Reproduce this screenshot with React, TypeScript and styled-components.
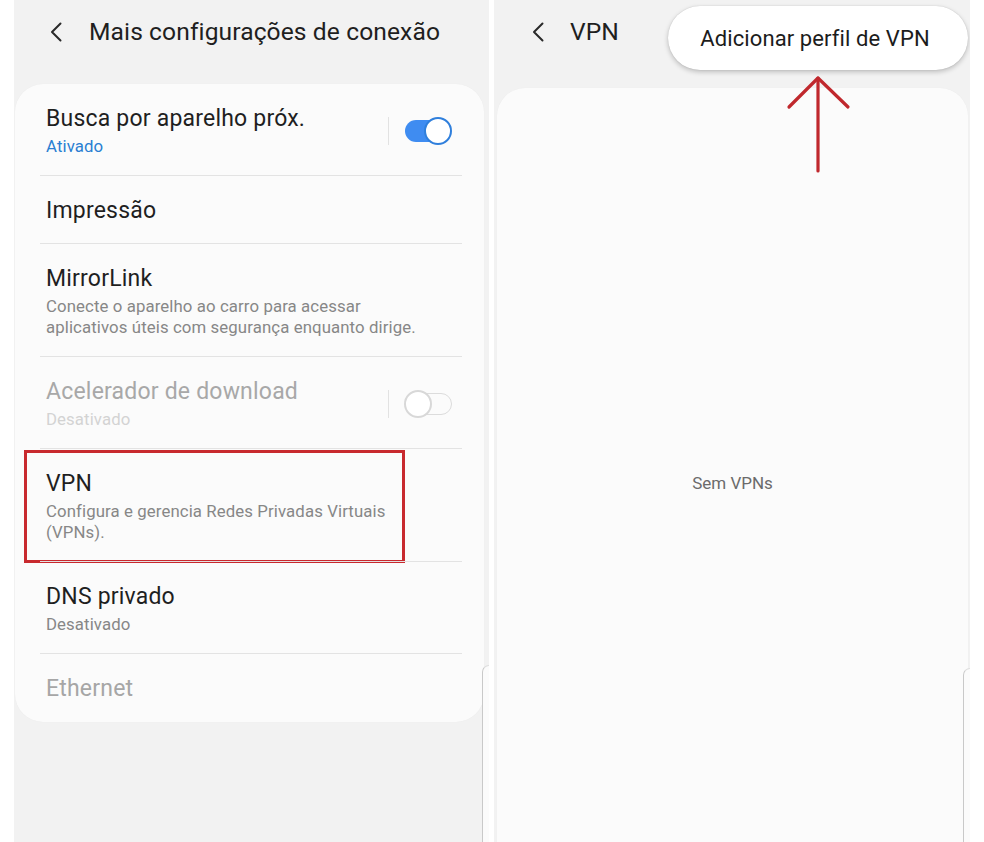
import React from "react";
import styled, { createGlobalStyle } from "styled-components";

const Global = createGlobalStyle`
  html, body { margin: 0; padding: 0; background: #ffffff; }
  body { font-family: Roboto, "Noto Sans", "Liberation Sans", sans-serif; -webkit-font-smoothing: antialiased; }
  * { box-sizing: border-box; }
`;

const Page = styled.div`
  width: 984px;
  height: 842px;
  padding: 0 14px;
  display: flex;
  gap: 5px;
  background: #ffffff;
  overflow: hidden;
`;

const Screen = styled.div<{ $w: number }>`
  position: relative;
  width: ${(p) => p.$w}px;
  height: 842px;
  background: #f2f2f2;
  display: flex;
  flex-direction: column;
  overflow: hidden;
`;

const Header = styled.div<{ $h: number; $pl: number; $gap: number }>`
  height: ${(p) => p.$h}px;
  padding: 0 0 ${(p) => p.$h - 64}px ${(p) => p.$pl}px;
  display: flex;
  align-items: center;
  gap: ${(p) => p.$gap}px;
  flex-shrink: 0;
`;

const HeaderTitle = styled.div`
  font-size: 24.6px;
  color: #1f1f1f;
  letter-spacing: 0.1px;
  line-height: 30px;
`;

const Card = styled.div<{ $ml: number; $mr: number; $fill?: boolean }>`
  margin: 0 ${(p) => p.$mr}px 0 ${(p) => p.$ml}px;
  background: #fbfbfb;
  border-radius: ${(p) => (p.$fill ? "28px 28px 0 0" : "28px")};
  box-shadow: 0 0 1px rgba(0, 0, 0, 0.06);
  display: flex;
  flex-direction: column;
  ${(p) => (p.$fill ? "flex: 1;" : "")}
`;

const Row = styled.div<{ $last?: boolean }>`
  position: relative;
  display: flex;
  align-items: center;
  padding: 21px 32px 19px 31px;
  &::after {
    content: "";
    display: ${(p) => (p.$last ? "none" : "block")};
    position: absolute;
    left: 25px;
    right: 22px;
    bottom: 0;
    height: 1px;
    background: #e3e3e3;
  }
`;

const TextBlock = styled.div`
  flex: 1;
  max-width: 385px;
`;

const Title = styled.div<{ $tone?: "normal" | "muted" | "disabled" }>`
  font-size: 23px;
  line-height: 28px;
  letter-spacing: 0.2px;
  color: ${(p) =>
    p.$tone === "disabled" ? "#a8a8a8" : p.$tone === "muted" ? "#a6a6a6" : "#1f1f1f"};
`;

const Sub = styled.div<{ $tone?: "grey" | "blue" | "faint" }>`
  margin-top: 3px;
  font-size: 16.8px;
  line-height: 21px;
  letter-spacing: 0.1px;
  color: ${(p) => (p.$tone === "blue" ? "#2a7fd2" : p.$tone === "faint" ? "#d3d3d3" : "#878787")};
`;

const SwitchArea = styled.div`
  display: flex;
  align-items: center;
  gap: 15px;
  margin-left: auto;
`;

const VSep = styled.div`
  width: 1px;
  height: 28px;
  background: #e2e2e2;
`;

const Track = styled.div<{ $on: boolean }>`
  position: relative;
  width: 48px;
  height: 28px;
  display: flex;
  align-items: center;
  justify-content: ${(p) => (p.$on ? "flex-end" : "flex-start")};
  &::before {
    content: "";
    position: absolute;
    top: 3px;
    bottom: 3px;
    border-radius: 12px;
    ${(p) =>
      p.$on
        ? "left: 1px; right: 4px; background: #3f8cf1;"
        : "left: 6px; right: 0px; background: transparent; border: 1.5px solid #dcdcdc;"}
  }
`;

const Thumb = styled.div<{ $on: boolean }>`
  position: relative;
  width: 28px;
  height: 28px;
  border-radius: 50%;
  background: #ffffff;
  border: 2px solid ${(p) => (p.$on ? "#2f7fdc" : "#d8d8d8")};
`;

const Highlight = styled.div`
  position: absolute;
  left: 9px;
  top: 1px;
  width: 381px;
  bottom: -1px;
  border: 3.5px solid #c8292e;
  pointer-events: none;
`;

const EdgePeek = styled.div<{ $top: number }>`
  position: absolute;
  right: 0;
  top: ${(p) => p.$top}px;
  bottom: 0;
  width: 7px;
  background: #fbfbfb;
  border-left: 1.5px solid #c9c9c9;
  border-top: 1px solid #dddddd;
  border-top-left-radius: 8px;
`;

const Menu = styled.div`
  position: absolute;
  left: 174px;
  top: 6px;
  width: 300px;
  height: 64px;
  border-radius: 32px;
  background: #ffffff;
  box-shadow: 0 2px 5px rgba(0, 0, 0, 0.22), 0 0 1px rgba(0, 0, 0, 0.2);
  display: flex;
  align-items: center;
  justify-content: center;
  padding-right: 6px;
  font-size: 22px;
  color: #1c1c1c;
  letter-spacing: 0.1px;
`;

const ArrowMark = styled.svg`
  position: absolute;
  left: 292px;
  top: 74px;
`;

const Empty = styled.div`
  margin-top: 385px;
  text-align: center;
  font-size: 17px;
  line-height: 20px;
  color: #6b6b6b;
`;

const Chevron = () => (
  <svg width="12" height="20" viewBox="0 0 12 20">
    <polyline points="10.5,1.5 2,10 10.5,18.5" fill="none" stroke="#2a2a2a" strokeWidth="2" strokeLinecap="round" strokeLinejoin="round" />
  </svg>
);

const Switch = ({ on }: { on: boolean }) => (
  <SwitchArea>
    <VSep />
    <Track $on={on}>
      <Thumb $on={on} />
    </Track>
  </SwitchArea>
);

export default function App() {
  return (
    <>
      <Global />
      <Page>
        <Screen $w={475}>
          <Header $h={84} $pl={36} $gap={27}>
            <Chevron />
            <HeaderTitle>Mais configurações de conexão</HeaderTitle>
          </Header>
          <Card $ml={1} $mr={5}>
            <Row>
              <TextBlock>
                <Title>Busca por aparelho próx.</Title>
                <Sub $tone="blue">Ativado</Sub>
              </TextBlock>
              <Switch on />
            </Row>
            <Row>
              <TextBlock>
                <Title>Impressão</Title>
              </TextBlock>
            </Row>
            <Row>
              <TextBlock>
                <Title>MirrorLink</Title>
                <Sub>Conecte o aparelho ao carro para acessar aplicativos úteis com segurança enquanto dirige.</Sub>
              </TextBlock>
            </Row>
            <Row>
              <TextBlock>
                <Title $tone="disabled">Acelerador de download</Title>
                <Sub $tone="faint">Desativado</Sub>
              </TextBlock>
              <Switch on={false} />
            </Row>
            <Row>
              <TextBlock>
                <Title>VPN</Title>
                <Sub>Configura e gerencia Redes Privadas Virtuais (VPNs).</Sub>
              </TextBlock>
              <Highlight />
            </Row>
            <Row>
              <TextBlock>
                <Title>DNS privado</Title>
                <Sub>Desativado</Sub>
              </TextBlock>
            </Row>
            <Row $last>
              <TextBlock>
                <Title $tone="muted">Ethernet</Title>
              </TextBlock>
            </Row>
          </Card>
          <EdgePeek $top={665} />
        </Screen>
        <Screen $w={476}>
          <Header $h={88} $pl={38} $gap={26}>
            <Chevron />
            <HeaderTitle>VPN</HeaderTitle>
          </Header>
          <Card $ml={3} $mr={2} $fill>
            <Empty>Sem VPNs</Empty>
          </Card>
          <EdgePeek $top={668} />
          <Menu>Adicionar perfil de VPN</Menu>
          <ArrowMark width="65" height="100" viewBox="0 0 65 100">
            <g fill="none" stroke="#c0282d" strokeWidth="3.2" strokeLinecap="round" strokeLinejoin="round">
              <line x1="32" y1="4" x2="32" y2="97" />
              <polyline points="3,33 32,4 62,33" />
            </g>
          </ArrowMark>
        </Screen>
      </Page>
    </>
  );
}
